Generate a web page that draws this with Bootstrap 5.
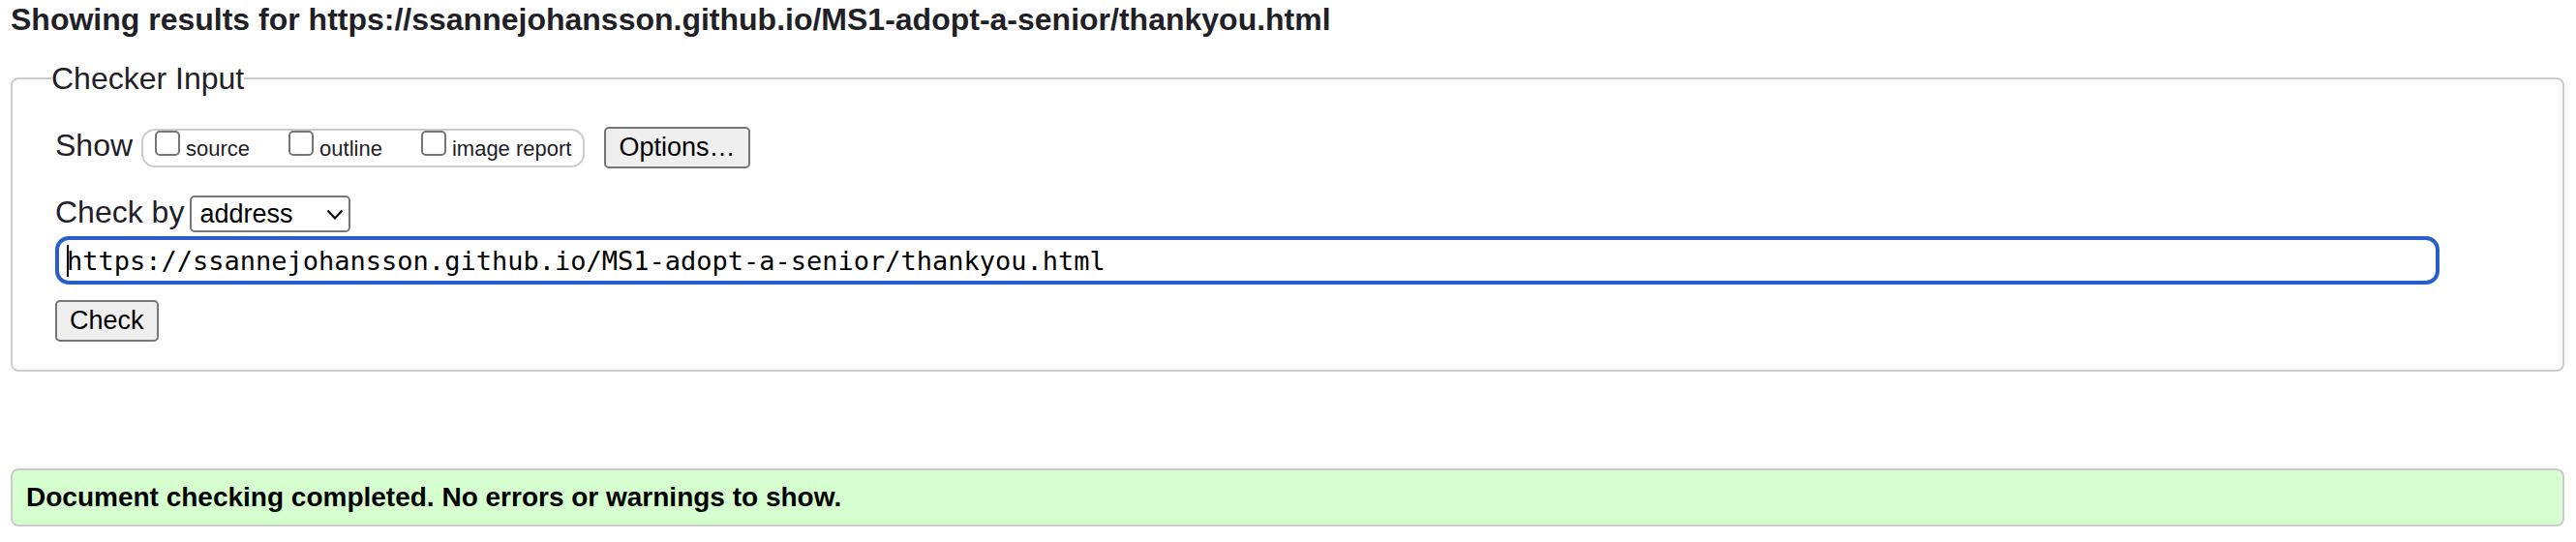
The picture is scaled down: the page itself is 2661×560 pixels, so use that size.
<!DOCTYPE html>
<html lang="en">
<head>
<meta charset="utf-8">
<meta name="viewport" content="width=device-width, initial-scale=1">
<title>Showing results for https://ssannejohansson.github.io/MS1-adopt-a-senior/thankyou.html</title>
<link href="https://cdn.jsdelivr.net/npm/bootstrap@5.3.0/dist/css/bootstrap.min.css" rel="stylesheet">
<style>
  body { font-family: "Liberation Sans", Arial, sans-serif; font-size: 32px; line-height: 40px; color: #1f2126; background: #fff; padding: 0 12px 0 11px; }
  h1 { font-size: 32px; line-height: 40px; margin-bottom: 21px; }
  .checker { border: 2px solid #ccc; border-radius: 8px; padding: 0 127px 29px 44px; }
  .checker legend { float: none; width: auto; font-size: 32px; line-height: 40px; margin: 0 0 29px -4px; }
  .show-row { margin-bottom: 26px; }
  .show-set { border: 2px solid #ccc; border-radius: 14px; font-size: 22px; line-height: 35px; padding: 0 12px; gap: 40px; margin: 0 20px 0 9px; }
  .show-set label { gap: 6px; }
  .show-set input { appearance: none; width: 26px; height: 26px; margin: 0; border: 2px solid #767676; border-radius: 5px; background: #fff; }
  .show-set input:checked { background: #295fcc; }
  .plain-btn { font-size: 27px; line-height: 39px; padding: 0 13px; color: #000; background: #efefef; border: 2px solid #767676; border-radius: 5px; }
  .by-select { appearance: none; width: 166px; height: 38px; font-size: 27px; line-height: 34px; padding: 0 8px; color: #000; background: #fff; border: 2px solid #767676; border-radius: 5px; }
  .by-row { gap: 6px; line-height: 38px; margin-bottom: 4px; }
  .chevron { right: 7px; top: 14px; pointer-events: none; }
  .address { margin-bottom: 16px; }
  .address input { height: 50px; font-family: "DejaVu Sans Mono", monospace; font-size: 27px; line-height: 42px; padding: 0 8px; color: #000; background: #fff; border: 4px solid #295fcc; border-radius: 14px; outline: 0; }
  .caret { left: 12px; top: 9px; width: 2px; height: 33px; background: #000; pointer-events: none; }
  .result { margin-top: 100px; border: 2px solid #ccc; border-radius: 8px; background: #d5ffcf; color: #000; font-size: 28px; line-height: 32px; padding: 12px 14px; }
</style>
</head>
<body>
<main>
  <h1 class="fw-bold">Showing results for https://ssannejohansson.github.io/MS1-adopt-a-senior/thankyou.html</h1>
  <form onsubmit="return false">
    <fieldset class="checker">
      <legend>Checker Input</legend>
      <div class="show-row d-flex align-items-baseline">
        <span>Show</span>
        <div class="show-set d-flex align-items-baseline">
          <label class="d-flex align-items-baseline"><input type="checkbox" name="source">source</label>
          <label class="d-flex align-items-baseline"><input type="checkbox" name="outline">outline</label>
          <label class="d-flex align-items-baseline"><input type="checkbox" name="imagereport">image report</label>
        </div>
        <button type="button" class="plain-btn">Options…</button>
      </div>
      <div class="by-row d-flex align-items-baseline">
        <label for="by">Check by</label>
        <div class="position-relative d-flex">
          <select id="by" class="by-select"><option>address</option><option>file upload</option><option>text input</option></select>
          <svg class="chevron position-absolute" width="18" height="12" viewBox="0 0 18 12" fill="none" stroke="#000" stroke-width="2" aria-hidden="true"><path d="M1.500 1.500 9 9.500 16.500 1.500"/></svg>
        </div>
      </div>
      <div class="address position-relative d-flex">
        <input class="w-100" type="url" aria-label="Address" value="https://ssannejohansson.github.io/MS1-adopt-a-senior/thankyou.html">
        <span class="caret position-absolute"></span>
      </div>
      <button type="submit" class="plain-btn d-block">Check</button>
    </fieldset>
  </form>
  <p class="result fw-bold mb-0" role="status">Document checking completed. No errors or warnings to show.</p>
</main>
<script src="https://cdn.jsdelivr.net/npm/bootstrap@5.3.0/dist/js/bootstrap.bundle.min.js"></script>
</body>
</html>
